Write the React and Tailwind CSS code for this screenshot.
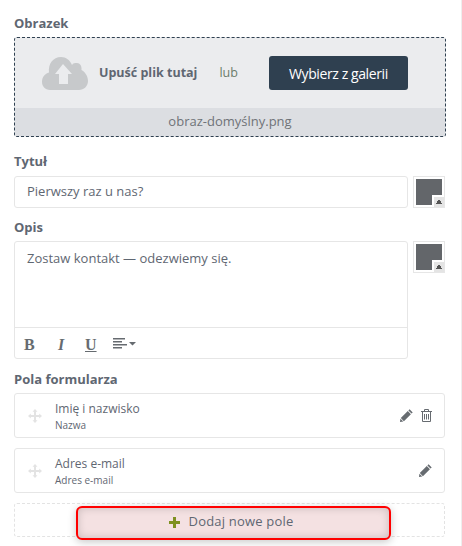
const labelCls = 'text-[13px] leading-[18px] font-bold text-[#5f6772]';

function Swatch() {
  return (
    <div className="relative w-[32px] h-[32px] shrink-0 border border-[#e6e6e6] bg-white p-[2px]">
      <div className="w-[26px] h-[26px] bg-[#63666a]" />
      <div className="absolute right-0 bottom-0 w-[10px] h-[10px] bg-[#e4e4e4] border-l-2 border-t-2 border-white box-content flex items-center justify-center">
        <svg width="6" height="4" viewBox="0 0 6 4"><path d="M2 0h2v1h1v2h1v1H0V3h1V1h1z" fill="#555" /></svg>
      </div>
    </div>
  );
}

function CloudIcon() {
  return (
    <svg width="46" height="33" viewBox="0 0 46 33">
      <path d="M8 33C3 33 0 29 0 25C0 20 3 16.500 7 15.500C6 7 11 0 19 0C24 0 28 3 30 8C31 6 33 6 35 6C38 6 40 9 39.500 13C43 15 46 19 46 24C46 29 42 33 37 33Z" fill="#c7c9cb" />
      <path d="M21 7L13 17H17V27H26V17H30Z" fill="#ebecee" />
    </svg>
  );
}

function MoveIcon() {
  return (
    <svg width="14" height="14" viewBox="0 0 14 14" fill="#e3e3e3">
      <path d="M7 0L9.500 2.800H8V6H11.200V4.500L14 7L11.200 9.500V8H8V11.200H9.500L7 14L4.500 11.200H6V8H2.800V9.500L0 7L2.800 4.500V6H6V2.800H4.500Z" />
    </svg>
  );
}

function PencilIcon() {
  return (
    <svg width="13" height="13" viewBox="0 0 13 13" fill="#666b70">
      <path d="M9.600 0.300L12.700 3.400L11.500 4.600L8.400 1.500ZM7.800 2.100L10.900 5.200L3.900 12.200L0.800 9.100ZM0.400 9.700L3.300 12.600L0 13Z" />
    </svg>
  );
}

function TrashIcon() {
  return (
    <svg width="11" height="13" viewBox="0 0 11 13" fill="none" stroke="#666b70">
      <path d="M0 2.500H11M3.500 2.500V0.500H7.500V2.500M1.500 2.500V12.500H9.500V2.500M3.500 5V10.500M5.500 5V10.500M7.500 5V10.500" />
    </svg>
  );
}

function FieldRow({ title, sub, canDelete }) {
  return (
    <div className="h-[45px] rounded-[3px] border border-[#e6e6e6] bg-white flex items-center pl-[13px] pr-[12px]">
      <MoveIcon />
      <div className="ml-[13px] flex-1">
        <div className="text-[12px] leading-[17px] text-[#5f6772]">{title}</div>
        <div className="text-[10px] leading-[14px] mt-[1px] text-[#5f6772]">{sub}</div>
      </div>
      <div className="flex items-center gap-[8px]">
        <PencilIcon />
        {canDelete && <TrashIcon />}
      </div>
    </div>
  );
}

export default function App() {
  return (
    <div className="relative w-[462px] h-[546px] overflow-hidden bg-white border-r border-[#eeeeee] px-[14px] pt-[14px] font-['Open_Sans',sans-serif]">
      <div className={labelCls}>Obrazek</div>

      <div className="mt-[5px] w-[432px] h-[100px] rounded-[3px] border border-dashed border-[#2f4050] bg-[#ebecee] flex flex-col overflow-hidden">
        <div className="h-[70px] flex items-center pl-[27px]">
          <CloudIcon />
          <span className="ml-[11px] text-[12.500px] font-bold text-[#5f6772]">Upuść plik tutaj</span>
          <span className="ml-[22px] text-[12.500px] text-[#6b7d6b]">lub</span>
          <button className="ml-[31px] w-[139px] h-[34px] rounded-[3px] bg-[#2f4050] text-white text-[14px] tracking-[-0.4px]">Wybierz z galerii</button>
        </div>
        <div className="flex-1 bg-[#dcdee2] flex items-center justify-center text-[13px] text-[#6f7378]">obraz-domyślny.png</div>
      </div>

      <div className={`${labelCls} mt-[15px]`}>Tytuł</div>
      <div className="mt-[6px] flex gap-[5px]">
        <div className="w-[394px] h-[32px] rounded-[3px] border border-[#e6e6e6] flex items-center pl-[12px] text-[13px] text-[#5f6772]">Pierwszy raz u nas?</div>
        <Swatch />
      </div>

      <div className={`${labelCls} mt-[10px]`}>Opis</div>
      <div className="mt-[5px] flex gap-[5px] items-start">
        <div className="w-[394px] h-[118px] rounded-[3px] border border-[#e6e6e6] flex flex-col">
          <div className="h-[85px] px-[12px] pt-[7px] text-[13px] leading-[18px] text-[#5f6772]">Zostaw kontakt — odezwiemy się.</div>
          <div className="flex-1 border-t border-[#e6e6e6] flex items-center pl-[9px] font-['Liberation_Serif',serif] text-[#666b70] font-bold text-[16px] leading-none">
            <span className="w-[32px] mt-[4px]">B</span>
            <span className="w-[29px] mt-[4px] pl-[2px] italic">I</span>
            <span className="w-[28px] mt-[4px] underline">U</span>
            <svg width="24" height="11" viewBox="0 0 24 11" fill="#666b70">
              <path d="M0 0h12v1.500H0zM0 3h9v1.500H0zM0 6h14v1.500H0zM0 9h9v1.500H0zM16 4h7l-3.500 3.500z" />
            </svg>
          </div>
        </div>
        <Swatch />
      </div>

      <div className={`${labelCls} mt-[11px]`}>Pola formularza</div>
      <div className="mt-[5px] w-[431px] flex flex-col gap-[10px]">
        <FieldRow title="Imię i nazwisko" sub="Nazwa" canDelete />
        <FieldRow title="Adres e-mail" sub="Adres e-mail" />
        <div className="h-[34px] rounded-[3px] border border-dashed border-[#e3e3e3]" />
      </div>

      <button className="absolute left-[76px] top-[506px] w-[315px] h-[34px] rounded-[6px] border-2 border-[#ff0000] bg-[#f4e1e2] pr-[5px] pb-[2px] shadow-[0_2px_8px_rgba(0,0,0,0.22),inset_0_0_8px_rgba(0,0,0,0.18)] flex items-center justify-center text-[13px] tracking-[0.2px] text-[#5f6772]">
        <svg width="11" height="11" viewBox="0 0 11 11" fill="#7f9020" className="mr-[9px]">
          <path d="M4 0h3v4h4v3H7v4H4V7H0V4h4z" />
        </svg>
        Dodaj nowe pole
      </button>
    </div>
  );
}
